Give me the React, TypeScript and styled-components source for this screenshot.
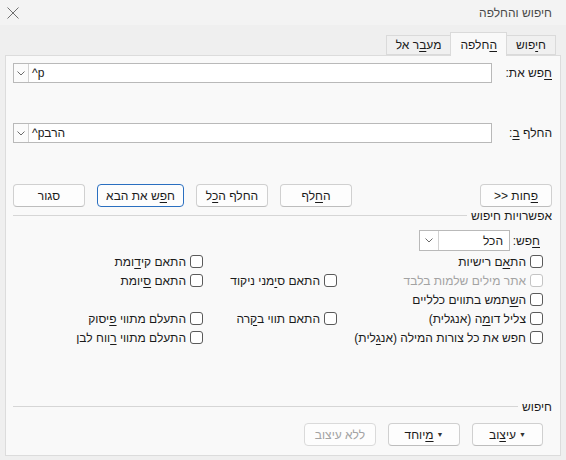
import React from 'react';
import styled, { createGlobalStyle } from 'styled-components';

const GlobalStyle = createGlobalStyle`
  html, body {
    margin: 0;
    padding: 0;
    background: #efefef;
  }
  body {
    font-family: "Liberation Sans", Arial, sans-serif;
    font-size: 12px;
    color: #1b1b1b;
  }
`;

const Dialog = styled.div`
  direction: rtl;
  width: 566px;
  height: 460px;
  display: flex;
  flex-direction: column;
  background: #efefef;
  overflow: hidden;
`;

const TitleBar = styled.div`
  height: 25px;
  flex: none;
  display: flex;
  align-items: center;
  justify-content: space-between;
  padding: 0 14px 0 7px;
  background: #f3f3f3;
`;

const Title = styled.span`
  color: #4a4a4a;
  font-size: 12px;
`;

const TabStrip = styled.div`
  height: 30px;
  flex: none;
  display: flex;
  align-items: flex-end;
  padding: 0 10px;
  position: relative;
  z-index: 1;
`;

const Tab = styled.div<{ $active?: boolean }>`
  box-sizing: border-box;
  height: ${(p) => (p.$active ? '24px' : '20px')};
  margin-bottom: ${(p) => (p.$active ? '-1px' : '0')};
  margin-left: -1px;
  padding: 0 9px;
  display: flex;
  align-items: center;
  border: 1px solid #dadada;
  border-bottom: ${(p) => (p.$active ? 'none' : '1px solid #dadada')};
  background: ${(p) => (p.$active ? '#f9f9f9' : '#f0f0f0')};
  color: #1b1b1b;
`;

const Panel = styled.div`
  flex: 1;
  margin: 0 5px 4px 5px;
  box-sizing: border-box;
  border: 1px solid #dcdcdc;
  background: #f9f9f9;
  display: flex;
  flex-direction: column;
  padding: 7px 8px 9px 7px;
`;

const FieldRow = styled.div<{ $gap?: number }>`
  display: flex;
  align-items: center;
  height: 20px;
  margin-top: ${(p) => p.$gap ?? 0}px;
`;

const FieldLabel = styled.label`
  width: 60px;
  flex: none;
`;

const Combo = styled.div`
  flex: 1;
  height: 20px;
  box-sizing: border-box;
  border: 1px solid #b9b9b9;
  background: #fff;
  display: flex;
  align-items: center;
  direction: ltr;
`;

const ComboButton = styled.div`
  width: 15px;
  height: 18px;
  box-sizing: border-box;
  border-right: 1px solid #d2d2d2;
  display: flex;
  align-items: center;
  justify-content: center;
  background: #fbfbfb;
`;

const ComboText = styled.span`
  padding-left: 3px;
  unicode-bidi: plaintext;
`;

const ButtonRow = styled.div<{ $top: number; $inset?: boolean }>`
  display: flex;
  align-items: center;
  gap: 12px;
  margin-top: ${(p) => p.$top}px;
  padding-right: ${(p) => (p.$inset ? 9 : 0)}px;
`;

const Spacer = styled.div`
  flex: 1;
`;

const Button = styled.button<{ $w?: number; $primary?: boolean }>`
  width: ${(p) => p.$w ?? 72}px;
  height: 23px;
  box-sizing: border-box;
  padding: 0;
  font-family: inherit;
  font-size: 12px;
  color: #1b1b1b;
  background: #fdfdfd;
  border: 1px solid ${(p) => (p.$primary ? '#2a6fc0' : '#d0d0d0')};
  border-bottom-color: ${(p) => (p.$primary ? '#2a6fc0' : '#bdbdbd')};
  border-radius: 4px;
  display: flex;
  align-items: center;
  justify-content: center;
  direction: rtl;
  &:disabled {
    color: #a3a3a3;
    border-color: #dadada;
  }
`;

const SectionHead = styled.div<{ $top: number }>`
  display: flex;
  align-items: center;
  gap: 4px;
  height: 13px;
  margin-top: ${(p) => p.$top}px;
`;

const SectionLine = styled.div`
  flex: 1;
  height: 1px;
  background: #d6d6d6;
`;

const Options = styled.div`
  padding-right: 9px;
  display: flex;
  flex-direction: column;
`;

const SearchRow = styled.div`
  display: flex;
  align-items: center;
  margin-top: 8px;
  padding-right: 3px;
`;

const SearchLabel = styled.label`
  width: 30px;
  flex: none;
`;

const Select = styled.div`
  width: 91px;
  height: 21px;
  box-sizing: border-box;
  border: 1px solid #b9b9b9;
  background: #fff;
  display: flex;
  align-items: center;
`;

const SelectText = styled.span`
  flex: 1;
  padding-right: 6px;
`;

const SelectArrow = styled.div`
  width: 18px;
  height: 19px;
  border-right: 1px solid #d2d2d2;
  display: flex;
  align-items: center;
  justify-content: center;
`;

const Grid = styled.div`
  display: grid;
  grid-template-columns: 206px 134px 1fr;
  grid-auto-rows: 19px;
  margin-top: 1px;
`;

const Check = styled.label<{ $disabled?: boolean }>`
  display: flex;
  align-items: center;
  gap: 4px;
  white-space: nowrap;
  color: ${(p) => (p.$disabled ? '#a3a3a3' : '#1b1b1b')};
`;

const Box = styled.span<{ $disabled?: boolean }>`
  width: 13px;
  height: 13px;
  box-sizing: border-box;
  flex: none;
  border: 1px solid ${(p) => (p.$disabled ? '#c4c4c4' : '#5a5a5a')};
  border-radius: 3px;
  background: #fff;
`;

const Acc = styled.u`
  text-decoration: underline;
  text-underline-offset: 2px;
`;

const Caret = styled.span`
  font-size: 7px;
  color: #333;
  margin-left: 3px;
`;

const Chevron = () => (
  <svg width="8" height="5" viewBox="0 0 8 5">
    <path d="M0.5 0.5 L4 4 L7.5 0.5" fill="none" stroke="#6b6b6b" strokeWidth="1" />
  </svg>
);

const CloseIcon = () => (
  <svg width="12" height="12" viewBox="0 0 12 12">
    <path d="M0.5 0.5 L11.5 11.5 M11.5 0.5 L0.5 11.5" stroke="#6f6f6f" strokeWidth="1" />
  </svg>
);

type Opt = { label: React.ReactNode; disabled?: boolean } | null;

const grid: Opt[] = [
  { label: <>הת<Acc>א</Acc>ם רישיות</> },
  null,
  { label: <>התאם קי<Acc>ד</Acc>ומת</> },
  { label: <>אתר מילים שלמות בלבד</>, disabled: true },
  { label: <>התאם ס<Acc>י</Acc>מני ניקוד</> },
  { label: <>התאם <Acc>ס</Acc>יומת</> },
  { label: <>ה<Acc>ש</Acc>תמש בתווים כלליים</> },
  null,
  null,
  { label: <>צליל דו<Acc>מ</Acc>ה (אנגלית)</> },
  { label: <>התאם תווי ב<Acc>ק</Acc>רה</> },
  { label: <>התעלם מתווי <Acc>פ</Acc>יסוק</> },
  { label: <>חפש את כל צורות המילה (אנ<Acc>ג</Acc>לית)</> },
  null,
  { label: <>התעלם מתווי <Acc>ר</Acc>ווח לבן</> },
];

const App = () => (
  <>
    <GlobalStyle />
    <Dialog>
      <TitleBar>
        <Title>חיפוש והחלפה</Title>
        <CloseIcon />
      </TitleBar>
      <TabStrip>
        <Tab><span>ח<Acc>י</Acc>פוש</span></Tab>
        <Tab $active><span><Acc>ה</Acc>חלפה</span></Tab>
        <Tab><span>מע<Acc>ב</Acc>ר אל</span></Tab>
      </TabStrip>
      <Panel>
        <FieldRow>
          <FieldLabel><Acc>ח</Acc>פש את:</FieldLabel>
          <Combo>
            <ComboButton><Chevron /></ComboButton>
            <ComboText>^p</ComboText>
          </Combo>
        </FieldRow>
        <FieldRow $gap={40}>
          <FieldLabel>החלף <Acc>ב</Acc>:</FieldLabel>
          <Combo>
            <ComboButton><Chevron /></ComboButton>
            <ComboText>^pהרב</ComboText>
          </Combo>
        </FieldRow>
        <ButtonRow $top={41}>
          <Button><span><Acc>פ</Acc>חות &lt;&lt;</span></Button>
          <Spacer />
          <Button><span>ה<Acc>ח</Acc>לף</span></Button>
          <Button><span>החלף ה<Acc>כ</Acc>ל</span></Button>
          <Button $w={87} $primary><span>ח<Acc>פ</Acc>ש את הבא</span></Button>
          <Button><span>סגור</span></Button>
        </ButtonRow>
        <SectionHead $top={2}>
          <span>אפשרויות חיפוש</span>
          <SectionLine />
        </SectionHead>
        <Options>
          <SearchRow>
            <SearchLabel><Acc>ח</Acc>פש:</SearchLabel>
            <Select>
              <SelectText>הכל</SelectText>
              <SelectArrow><Chevron /></SelectArrow>
            </Select>
          </SearchRow>
          <Grid>
            {grid.map((o, i) =>
              o ? (
                <Check key={i} $disabled={o.disabled}>
                  <Box $disabled={o.disabled} />
                  <span>{o.label}</span>
                </Check>
              ) : (
                <span key={i} />
              )
            )}
          </Grid>
        </Options>
        <Spacer />
        <SectionHead $top={0}>
          <span>חיפוש</span>
          <SectionLine />
        </SectionHead>
        <ButtonRow $top={10} $inset>
          <Button $w={71}><Caret>▼</Caret><span>עי<Acc>צ</Acc>וב</span></Button>
          <Button><Caret>▼</Caret><span><Acc>מ</Acc>יוחד</span></Button>
          <Button disabled><span>ללא עיצוב</span></Button>
        </ButtonRow>
      </Panel>
    </Dialog>
  </>
);

export default App;
